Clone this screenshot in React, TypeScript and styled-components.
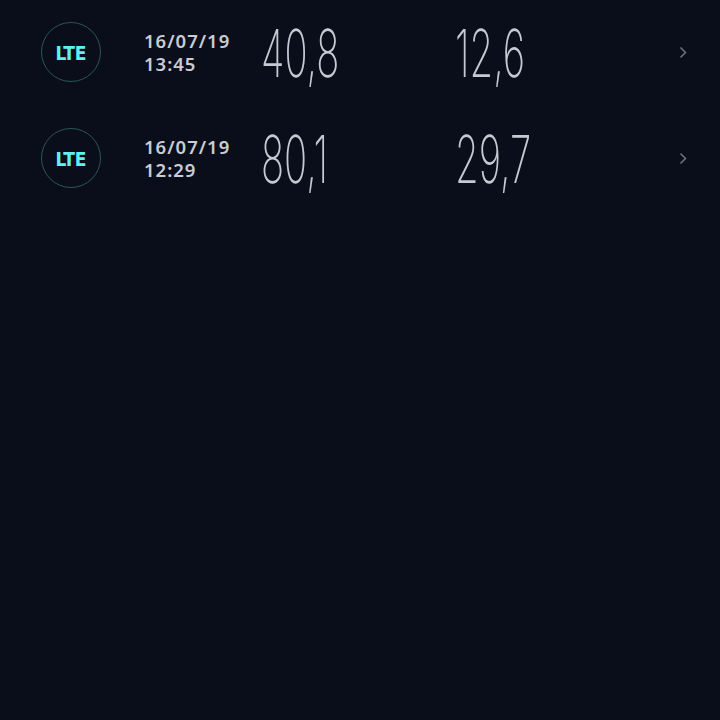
import React from "react";
import styled, { createGlobalStyle } from "styled-components";

const Global = createGlobalStyle`
  html, body { margin: 0; padding: 0; background: #0a0e1b; }
  body { width: 720px; height: 720px; overflow: hidden; }
`;

const Page = styled.div`
  width: 720px;
  height: 720px;
  background: #0a0e1b;
  display: flex;
  flex-direction: column;
`;

const Row = styled.div`
  display: grid;
  grid-template-columns: 62px 158px 194px 1fr 8px;
  align-items: center;
  height: 104px;
  padding: 0 33px 2px 41px;
`;

const Badge = styled.div`
  width: 60px;
  height: 60px;
  border-radius: 50%;
  border: 1px solid #2b5558;
  display: flex;
  align-items: center;
  justify-content: center;
  color: #5ef2ee;
  font-family: "DejaVu Sans Condensed", "DejaVu Sans", sans-serif;
  font-weight: 700;
  font-size: 19px;
  padding-top: 1px;
  box-sizing: border-box;
`;

const DateBlock = styled.div`
  padding-left: 41px;
  display: flex;
  flex-direction: column;
  font-family: "Noto Sans", sans-serif;
  font-weight: 600;
  font-size: 18.5px;
  line-height: 23px;
  color: #c9ccd3;
  letter-spacing: 1px;
`;

const Value = styled.div`
  font-family: Inter, sans-serif;
  font-weight: 180;
  font-size: 66px;
  line-height: 68px;
  color: #c6c9d1;
  transform: scaleX(0.58);
  transform-origin: left center;
  white-space: nowrap;
  margin-top: 1px;
`;

const Chevron = styled.svg`
  width: 8px;
  height: 13px;
  display: block;
`;

const rows = [
  { date: "16/07/19", time: "13:45", down: "40,8", up: "12,6" },
  { date: "16/07/19", time: "12:29", down: "80,1", up: "29,7" },
];

export default function App() {
  return (
    <Page>
      <Global />
      {rows.map((r, i) => (
        <Row key={i}>
          <Badge>LTE</Badge>
          <DateBlock>
            <span>{r.date}</span>
            <span>{r.time}</span>
          </DateBlock>
          <Value>{r.down}</Value>
          <Value>{r.up}</Value>
          <Chevron viewBox="0 0 8 13">
            <path d="M1.5 1.5 L6.5 6.5 L1.5 11.5" fill="none" stroke="#6b6f7a" strokeWidth="1.6" />
          </Chevron>
        </Row>
      ))}
    </Page>
  );
}
